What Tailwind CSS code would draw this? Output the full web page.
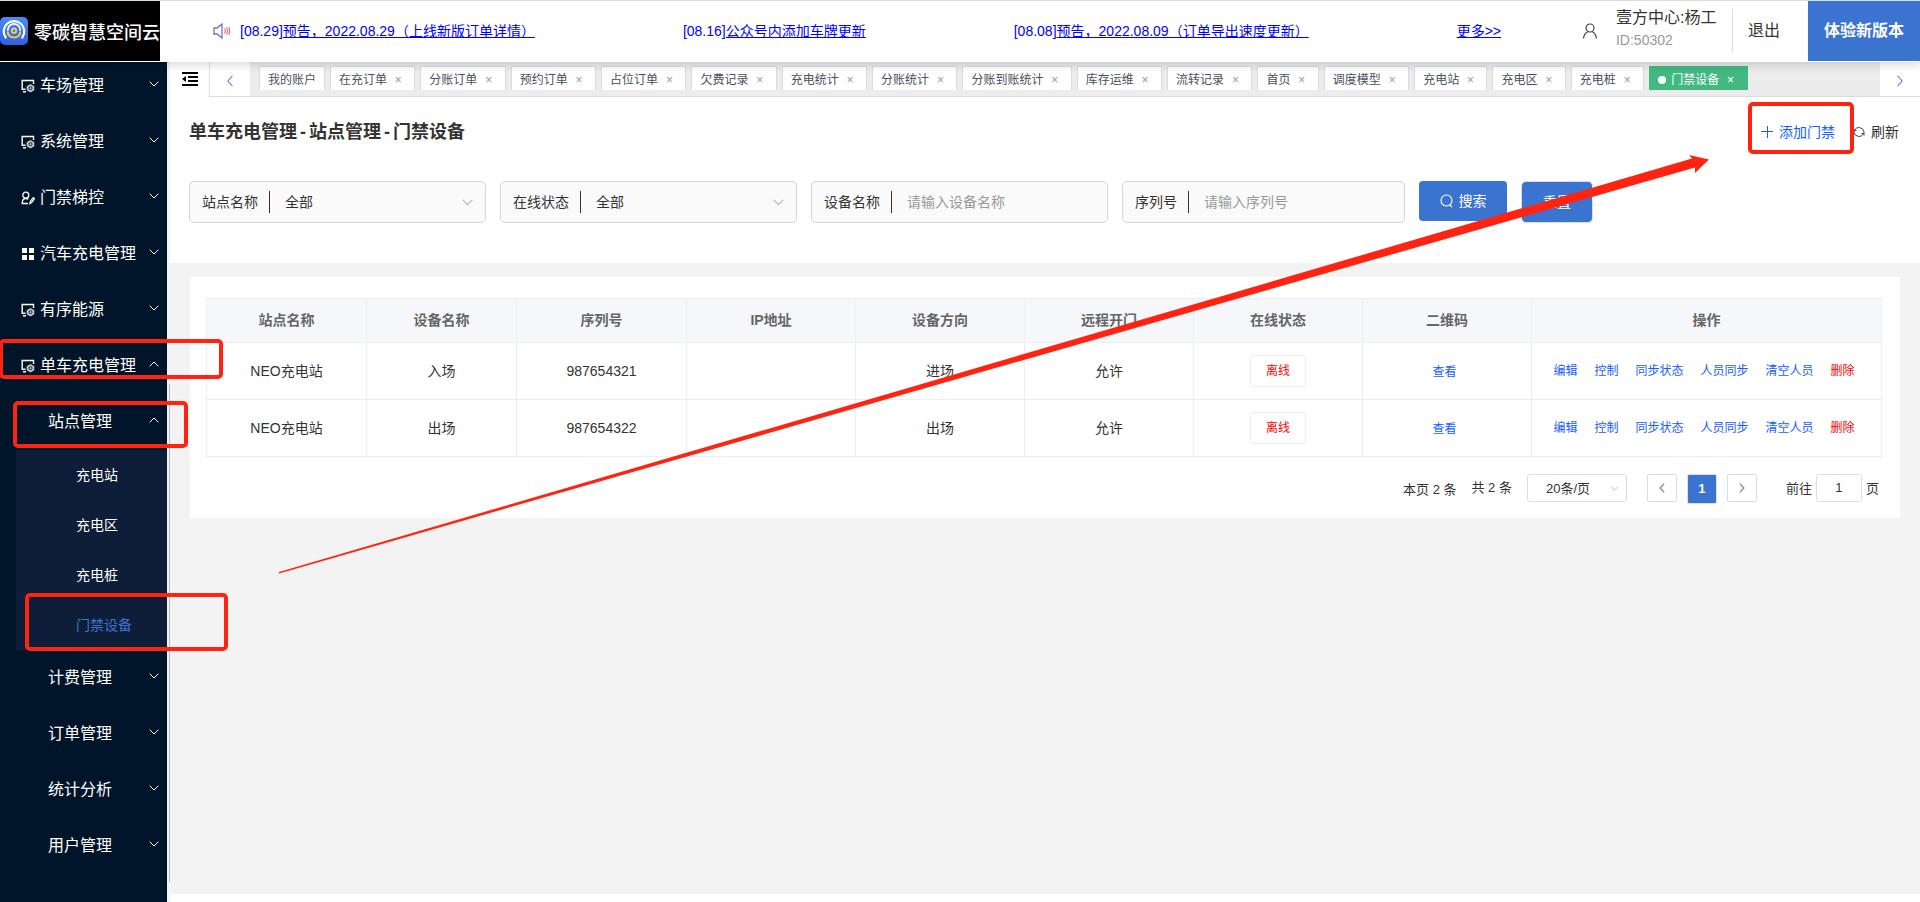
<!DOCTYPE html>
<html lang="zh-CN">
<head>
<meta charset="utf-8">
<meta name="viewport" content="width=device-width, initial-scale=1">
<title>零碳智慧空间云</title>
<script src="https://cdn.jsdelivr.net/npm/@tailwindcss/browser@4"></script>
</head>
<body class="relative flex h-screen flex-col overflow-hidden bg-white font-['Liberation_Sans','Noto_Sans_CJK_SC',sans-serif] text-sm text-[#333]">

<svg class="hidden" aria-hidden="true">
  <symbol id="down" viewBox="0 0 10 6"><path d="M.7.7 5 5 9.3.7" fill="none" stroke="currentColor"/></symbol>
  <symbol id="up" viewBox="0 0 10 6"><path d="M.7 5.3 5 1l4.3 4.3" fill="none" stroke="currentColor"/></symbol>
  <symbol id="left" viewBox="0 0 6 12"><path d="M5.5.7.8 6l4.7 5.3" fill="none" stroke="currentColor"/></symbol>
  <symbol id="right" viewBox="0 0 6 12"><path d="M.5.7 5.2 6 .5 11.3" fill="none" stroke="currentColor"/></symbol>
  <symbol id="monitor" viewBox="0 0 14 14"><path d="M12.500 5V1.500H1.200v8.700H4.500M2 12.700h3" fill="none" stroke="currentColor" stroke-width="1.400"/><path d="m9.500 5 3.800 2.200v4L9.500 13.500l-3.800-2.300v-4z" fill="currentColor" fill-opacity=".75"/><circle cx="9.500" cy="9.200" r="1.500" fill="none" stroke="#001529" stroke-width=".9"/></symbol>
</svg>

<header class="relative z-10 flex h-[62px] shrink-0 items-center border-t border-[#dcdcdc] bg-white pb-0.5 shadow-[0_2px_10px_rgba(0,0,0,0.18)]">
  <div class="flex h-[60px] w-40 shrink-0 items-center gap-1.5 self-start bg-black">
    <svg class="h-7 w-7 shrink-0" viewBox="0 0 28 28">
      <defs><linearGradient id="lg" x1="0" y1="0" x2="0" y2="1"><stop offset="0" stop-color="#4a8cf7"/><stop offset="1" stop-color="#2f5fe0"/></linearGradient></defs>
      <rect width="28" height="28" rx="5" fill="url(#lg)"/>
      <path d="M5.700 20.500A10.300 10.300 0 1 1 22.300 20.500" fill="none" stroke="#fff" stroke-width="2.200" stroke-linecap="round"/>
      <path d="M7.800 13a6.200 6.200 0 0 1 12.400 0" fill="none" stroke="#fff" stroke-width="1.800" stroke-linecap="round"/>
      <path d="M7.800 15.300a6.200 5.200 0 0 0 12.400 0" fill="none" stroke="#f5c842" stroke-width="2.200" stroke-linecap="round"/>
      <circle cx="14" cy="13.700" r="2.200" fill="none" stroke="#f5d060" stroke-width="1.800"/>
    </svg>
    <span class="whitespace-nowrap pt-1 text-lg font-medium leading-6 text-white">零碳智慧空间云</span>
  </div>
  <svg class="ml-[53px] h-4 w-[18px] shrink-0" viewBox="0 0 18 16" fill="none"><path d="M1 5h3l5-4v14l-5-4H1z" stroke="#6a73c4" stroke-width="1.300"/><path d="M11.500 5.500q1.500 2.500 0 5M13.500 4.500q2 3.500 0 7M15.700 4q2 4 0 8" stroke="#e8737a" stroke-width="1.200"/></svg>
  <nav class="ml-[9px] flex gap-[148px] whitespace-nowrap leading-5 text-[#0000ff]" aria-label="公告">
    <a href="#">[08.29]<span class="underline">预告，2022.08.29（上线新版订单详情）</span></a>
    <a href="#">[08.16]<span class="underline">公众号内添加车牌更新</span></a>
    <a href="#">[08.08]<span class="underline">预告，2022.08.09（订单导出速度更新）</span></a>
    <a href="#" class="underline">更多&gt;&gt;</a>
  </nav>
  <div class="ml-auto flex h-[60px] items-center self-start">
    <svg class="mr-[18px] h-4 w-4" viewBox="0 0 16 16" fill="none" stroke="#444" stroke-width="1.200"><circle cx="8" cy="5" r="4"/><path d="M1.500 15.500C2 11.500 4 9.500 6 8.800M14.500 15.500C14 11.500 12 9.500 10 8.800"/></svg>
    <div class="mb-1.5 w-[116px] whitespace-nowrap">
      <p class="text-base leading-6">壹方中心:杨工</p>
      <p class="leading-5 text-[#999]">ID:50302</p>
    </div>
    <div class="h-11 border-l border-[#dcdcdc]"></div>
    <button class="mx-[15px] text-base">退出</button>
    <button class="ml-[13px] h-[60px] w-28 bg-[#3b74d0] text-base font-bold text-white">体验新版本</button>
  </div>
</header>

<div class="flex min-h-0 flex-1">
  <aside class="flex w-[170px] shrink-0 bg-[#f3f3f3]">
    <nav class="w-[167px] overflow-hidden bg-[#001529] text-base text-white" aria-label="主菜单">
      <ul class="-mt-1">
        <li><a href="#" class="flex h-14 items-center gap-[5px] pl-[21px] pr-2"><svg class="h-3.5 w-3.5"><use href="#monitor"/></svg><span class="grow">车场管理</span><svg class="mb-1 h-1.5 w-2.5"><use href="#down"/></svg></a></li>
        <li><a href="#" class="flex h-14 items-center gap-[5px] pl-[21px] pr-2"><svg class="h-3.5 w-3.5"><use href="#monitor"/></svg><span class="grow">系统管理</span><svg class="mb-1 h-1.5 w-2.5"><use href="#down"/></svg></a></li>
        <li><a href="#" class="flex h-14 items-center gap-[5px] pl-[21px] pr-2"><svg class="h-3.5 w-3.5" viewBox="0 0 14 14" fill="none" stroke="currentColor" stroke-width="1.300"><circle cx="4.800" cy="4.200" r="3"/><path d="M7 12.500H1.200c0-3 1.300-5 3.600-5 1 0 1.800.3 2.400.9M9 12.500l.5-2.300 2.700-3.500 1.300 1-2.700 3.500z"/></svg><span class="grow">门禁梯控</span><svg class="mb-1 h-1.5 w-2.5"><use href="#down"/></svg></a></li>
        <li><a href="#" class="flex h-14 items-center gap-[5px] pl-[21px] pr-2"><svg class="h-3.5 w-3.5" viewBox="0 0 14 14" fill="currentColor"><path d="M1 1h5v5H1zM8 1h5v5H8zM1 8h5v5H1zM8 8h5v5H8z"/></svg><span class="grow whitespace-nowrap">汽车充电管理</span><svg class="mb-1 h-1.5 w-2.5"><use href="#down"/></svg></a></li>
        <li><a href="#" class="flex h-14 items-center gap-[5px] pl-[21px] pr-2"><svg class="h-3.5 w-3.5"><use href="#monitor"/></svg><span class="grow">有序能源</span><svg class="mb-1 h-1.5 w-2.5"><use href="#down"/></svg></a></li>
        <li><a href="#" class="flex h-14 items-center gap-[5px] pl-[21px] pr-2"><svg class="h-3.5 w-3.5"><use href="#monitor"/></svg><span class="grow whitespace-nowrap">单车充电管理</span><svg class="mb-1 h-1.5 w-2.5"><use href="#up"/></svg></a>
          <ul>
            <li><a href="#" class="flex h-14 items-center pl-12 pr-2"><span class="grow">站点管理</span><svg class="mb-1 h-1.5 w-2.5"><use href="#up"/></svg></a>
              <ul class="ml-4 bg-[#0e1e38] text-sm">
                <li><a href="#" class="flex h-[50px] items-center pl-[60px]">充电站</a></li>
                <li><a href="#" class="flex h-[50px] items-center pl-[60px]">充电区</a></li>
                <li><a href="#" class="flex h-[50px] items-center pl-[60px]">充电桩</a></li>
                <li><a href="#" class="flex h-[50px] items-center pl-[60px] text-[#3b74d0]" aria-current="page">门禁设备</a></li>
              </ul>
            </li>
            <li><a href="#" class="flex h-14 items-center pl-12 pr-2"><span class="grow">计费管理</span><svg class="mb-1 h-1.5 w-2.5"><use href="#down"/></svg></a></li>
            <li><a href="#" class="flex h-14 items-center pl-12 pr-2"><span class="grow">订单管理</span><svg class="mb-1 h-1.5 w-2.5"><use href="#down"/></svg></a></li>
            <li><a href="#" class="flex h-14 items-center pl-12 pr-2"><span class="grow">统计分析</span><svg class="mb-1 h-1.5 w-2.5"><use href="#down"/></svg></a></li>
            <li><a href="#" class="flex h-14 items-center pl-12 pr-2"><span class="grow">用户管理</span><svg class="mb-1 h-1.5 w-2.5"><use href="#down"/></svg></a></li>
          </ul>
        </li>
      </ul>
    </nav>
    <div class="flex grow justify-end pb-5 pt-[322px]"><div class="w-px bg-[#bbb]"></div></div>
  </aside>

  <div class="mb-2 flex min-w-0 flex-1 flex-col bg-[#f3f3f3]">
    <div class="flex h-[35px] shrink-0 bg-white">
      <button class="flex w-[39px] items-start justify-center pt-[9px]" aria-label="收起菜单">
        <svg class="h-4 w-4" viewBox="0 0 16 16" fill="#000"><path d="M0 1h16v2H0zM6 5h10v2H6zM6 9h10v2H6zM0 13h16v2H0zM4 5v6L0 8z"/></svg>
      </button>
      <div class="flex min-w-0 flex-1 border-b border-[#d8dce5]">
        <button class="flex w-[41px] shrink-0 items-center justify-center border-l border-[#e2e2e2] pt-1 text-[#165dff]" aria-label="向左"><svg class="h-3 w-1.5"><use href="#left"/></svg></button>
        <div class="flex min-w-0 flex-1 gap-[5px] overflow-hidden bg-[#ececec] pl-[9px] pt-1 text-xs leading-[26px] text-[#495060]">
          <a href="#" class="h-6 shrink-0 border border-b-0 border-[#d8dce5] bg-white px-2">我的账户</a>
          <a href="#" class="h-6 shrink-0 border border-b-0 border-[#d8dce5] bg-white px-2">在充订单 <span class="inline-block w-4 text-center text-[#999]">×</span></a>
          <a href="#" class="h-6 shrink-0 border border-b-0 border-[#d8dce5] bg-white px-2">分账订单 <span class="inline-block w-4 text-center text-[#999]">×</span></a>
          <a href="#" class="h-6 shrink-0 border border-b-0 border-[#d8dce5] bg-white px-2">预约订单 <span class="inline-block w-4 text-center text-[#999]">×</span></a>
          <a href="#" class="h-6 shrink-0 border border-b-0 border-[#d8dce5] bg-white px-2">占位订单 <span class="inline-block w-4 text-center text-[#999]">×</span></a>
          <a href="#" class="h-6 shrink-0 border border-b-0 border-[#d8dce5] bg-white px-2">欠费记录 <span class="inline-block w-4 text-center text-[#999]">×</span></a>
          <a href="#" class="h-6 shrink-0 border border-b-0 border-[#d8dce5] bg-white px-2">充电统计 <span class="inline-block w-4 text-center text-[#999]">×</span></a>
          <a href="#" class="h-6 shrink-0 border border-b-0 border-[#d8dce5] bg-white px-2">分账统计 <span class="inline-block w-4 text-center text-[#999]">×</span></a>
          <a href="#" class="h-6 shrink-0 border border-b-0 border-[#d8dce5] bg-white px-2">分账到账统计 <span class="inline-block w-4 text-center text-[#999]">×</span></a>
          <a href="#" class="h-6 shrink-0 border border-b-0 border-[#d8dce5] bg-white px-2">库存运维 <span class="inline-block w-4 text-center text-[#999]">×</span></a>
          <a href="#" class="h-6 shrink-0 border border-b-0 border-[#d8dce5] bg-white px-2">流转记录 <span class="inline-block w-4 text-center text-[#999]">×</span></a>
          <a href="#" class="h-6 shrink-0 border border-b-0 border-[#d8dce5] bg-white px-2">首页 <span class="inline-block w-4 text-center text-[#999]">×</span></a>
          <a href="#" class="h-6 shrink-0 border border-b-0 border-[#d8dce5] bg-white px-2">调度模型 <span class="inline-block w-4 text-center text-[#999]">×</span></a>
          <a href="#" class="h-6 shrink-0 border border-b-0 border-[#d8dce5] bg-white px-2">充电站 <span class="inline-block w-4 text-center text-[#999]">×</span></a>
          <a href="#" class="h-6 shrink-0 border border-b-0 border-[#d8dce5] bg-white px-2">充电区 <span class="inline-block w-4 text-center text-[#999]">×</span></a>
          <a href="#" class="h-6 shrink-0 border border-b-0 border-[#d8dce5] bg-white px-2">充电桩 <span class="inline-block w-4 text-center text-[#999]">×</span></a>
          <a href="#" class="h-6 shrink-0 border border-b-0 border-[#42b983] bg-[#42b983] px-2 text-white" aria-current="page"><span class="mr-[5px] inline-block h-2 w-2 rounded-full bg-white"></span>门禁设备 <span class="inline-block w-4 text-center">×</span></a>
        </div>
        <button class="flex w-10 shrink-0 items-center justify-center pt-1 text-[#165dff]" aria-label="向右"><svg class="h-3 w-1.5"><use href="#right"/></svg></button>
      </div>
    </div>

    <section class="h-[166px] shrink-0 bg-white pl-[19px] pr-[21px] pt-[21px]">
      <div class="flex h-7 items-center">
        <h1 class="flex gap-[3px] text-lg font-bold leading-7"><span>单车充电管理</span><span>-</span><span>站点管理</span><span>-</span><span>门禁设备</span></h1>
        <button class="ml-auto flex items-center gap-1.5 text-[#165dff]"><svg class="h-3 w-3" viewBox="0 0 12 12" stroke="currentColor"><path d="M0 5.500h12M6.500 0v12"/></svg>添加门禁</button>
        <button class="ml-[18px] flex items-center gap-1.5"><svg class="h-3 w-3" viewBox="0 0 12 12" fill="none" stroke="#444"><path d="M1.500 4.500A5 5 0 0 1 11 6v1.500M10.500 7.500A5 5 0 0 1 1 6V4.500M1 2.500v2h2.500M11 9.500v-2H8.500"/></svg>刷新</button>
      </div>
      <form class="mt-[35px] flex gap-3.5">
        <div class="relative flex h-[42px] w-[297px] items-center rounded-[5px] border border-[#d6d6d6] bg-[#fafafa] pl-3">
          <label for="site">站点名称</label><span class="ml-[11px] h-[22px] border-l border-[#333]"></span>
          <select id="site" class="h-full min-w-0 flex-1 appearance-none pl-[15px] outline-none"><option>全部</option></select>
          <svg class="pointer-events-none absolute right-3 top-[17px] h-[7px] w-[11px] text-[#b0b3ba]"><use href="#down"/></svg>
        </div>
        <div class="relative flex h-[42px] w-[297px] items-center rounded-[5px] border border-[#d6d6d6] bg-[#fafafa] pl-3">
          <label for="online">在线状态</label><span class="ml-[11px] h-[22px] border-l border-[#333]"></span>
          <select id="online" class="h-full min-w-0 flex-1 appearance-none pl-[15px] outline-none"><option>全部</option></select>
          <svg class="pointer-events-none absolute right-3 top-[17px] h-[7px] w-[11px] text-[#b0b3ba]"><use href="#down"/></svg>
        </div>
        <div class="flex h-[42px] w-[297px] items-center rounded-[5px] border border-[#d6d6d6] bg-[#fafafa] pl-3">
          <label for="device">设备名称</label><span class="ml-[11px] h-[22px] border-l border-[#333]"></span>
          <input id="device" class="h-full min-w-0 flex-1 pl-[15px] outline-none placeholder:text-[#999]" placeholder="请输入设备名称">
        </div>
        <div class="flex h-[42px] w-[283px] items-center rounded-[5px] border border-[#d6d6d6] bg-[#fafafa] pl-3">
          <label for="serial">序列号</label><span class="ml-[11px] h-[22px] border-l border-[#333]"></span>
          <input id="serial" class="h-full min-w-0 flex-1 pl-[15px] outline-none placeholder:text-[#999]" placeholder="请输入序列号">
        </div>
        <button type="submit" class="flex h-10 w-[88px] items-center justify-center gap-[5px] rounded bg-[#3b74d0] text-white"><svg class="h-3.5 w-3.5" viewBox="0 0 14 14" fill="none" stroke="currentColor" stroke-width="1.100"><circle cx="6.500" cy="6.500" r="5.500"/><path d="m9.800 11 2.200 2.200"/></svg>搜索</button>
        <button type="reset" class="h-[42px] w-[72px] rounded-[5px] border border-[#dcdfe6] bg-[#3b74d0] text-white">重置</button>
      </form>
    </section>

    <main class="mx-5 mt-3.5 bg-white px-4 pb-3.5 pt-[21px]">
      <div class="pr-0.5">
      <table class="w-full table-fixed border-collapse text-center leading-5 [&_td]:border [&_td]:border-[#ebeef5] [&_th]:border [&_th]:border-[#ebeef5] [&_th]:pb-0.5">
        <colgroup><col class="w-[160px]"><col class="w-[150px]"><col class="w-[170px]"><col class="w-[169px]"><col class="w-[169px]"><col class="w-[169px]"><col class="w-[169px]"><col class="w-[169px]"><col></colgroup>
        <thead>
          <tr class="h-11 bg-[#f5f7fa] text-[#666]"><th>站点名称</th><th>设备名称</th><th>序列号</th><th>IP地址</th><th>设备方向</th><th>远程开门</th><th>在线状态</th><th>二维码</th><th>操作</th></tr>
        </thead>
        <tbody>
          <tr class="h-[57px]">
            <td>NEO充电站</td><td>入场</td><td>987654321</td><td></td><td>进场</td><td>允许</td>
            <td><span class="inline-block h-8 w-14 rounded-[3px] border border-[#eee] align-middle text-xs leading-[30px] text-[#ff0000]">离线</span></td>
            <td><a href="#" class="mr-[5px] text-xs text-[#165dff]">查看</a></td>
            <td><div class="mr-[5px] flex justify-center gap-[17px] text-xs leading-5 text-[#165dff]"><a href="#">编辑</a><a href="#">控制</a><a href="#">同步状态</a><a href="#">人员同步</a><a href="#">清空人员</a><a href="#" class="text-[#ff0000]">删除</a></div></td>
          </tr>
          <tr class="h-[57px]">
            <td>NEO充电站</td><td>出场</td><td>987654322</td><td></td><td>出场</td><td>允许</td>
            <td><span class="inline-block h-8 w-14 rounded-[3px] border border-[#eee] align-middle text-xs leading-[30px] text-[#ff0000]">离线</span></td>
            <td><a href="#" class="mr-[5px] text-xs text-[#165dff]">查看</a></td>
            <td><div class="mr-[5px] flex justify-center gap-[17px] text-xs leading-5 text-[#165dff]"><a href="#">编辑</a><a href="#">控制</a><a href="#">同步状态</a><a href="#">人员同步</a><a href="#">清空人员</a><a href="#" class="text-[#ff0000]">删除</a></div></td>
          </tr>
        </tbody>
      </table>
      </div>
      <div class="mt-[17px] flex h-[30px] items-start justify-end pr-[5px] text-[13px] leading-7">
        <span class="mr-[15px] pt-0.5">本页 2 条</span>
        <span class="mr-[15px]">共 2 条</span>
        <div class="relative mr-5 h-7 w-[100px]">
          <select aria-label="每页条数" class="h-7 w-full appearance-none rounded-[3px] border border-[#dcdfe6] bg-white pl-[18px] outline-none"><option>20条/页</option></select>
          <svg class="pointer-events-none absolute right-2 top-3 h-[5px] w-[9px] text-[#b0b3ba]"><use href="#down"/></svg>
        </div>
        <button class="mr-2.5 flex h-7 w-[30px] items-center justify-center rounded-xs border border-[#d8dbe2] text-[#888]" aria-label="上一页"><svg class="h-2.5 w-1.5 [stroke-width:1.5]"><use href="#left"/></svg></button>
        <button class="mr-2.5 h-[30px] w-[30px] rounded-xs border border-[#dcdfe6] bg-[#3b74d0] font-bold text-white" aria-current="page">1</button>
        <button class="mr-[29px] flex h-7 w-[30px] items-center justify-center rounded-xs border border-[#d8dbe2] text-[#888]" aria-label="下一页"><svg class="h-2.5 w-1.5 [stroke-width:1.5]"><use href="#right"/></svg></button>
        <label for="goto" class="pt-px">前往</label>
        <input id="goto" value="1" class="mx-1 h-7 w-[46px] rounded-[3px] border border-[#dcdfe6] text-center outline-none">
        <span class="pt-px">页</span>
      </div>
    </main>
  </div>
</div>

<!-- Guide marks laid over the page -->
<svg class="pointer-events-none absolute left-0 top-0 z-20" width="1920" height="902" viewBox="0 0 1920 902" fill="none" stroke="#ff2412" stroke-width="4" aria-hidden="true">
  <rect x="1" y="341" width="220" height="36" rx="3"/>
  <rect x="15" y="403" width="171" height="43" rx="3"/>
  <rect x="27" y="595" width="199" height="54" rx="3"/>
  <rect x="1750" y="104" width="102" height="48" rx="3"/>
  <path d="M279 572 1692 158.500l-3-3.500L1709 159.500l-14 13.500v-5.500L279 573.500z" fill="#ff2412" stroke="none"/>
</svg>
</body>
</html>
